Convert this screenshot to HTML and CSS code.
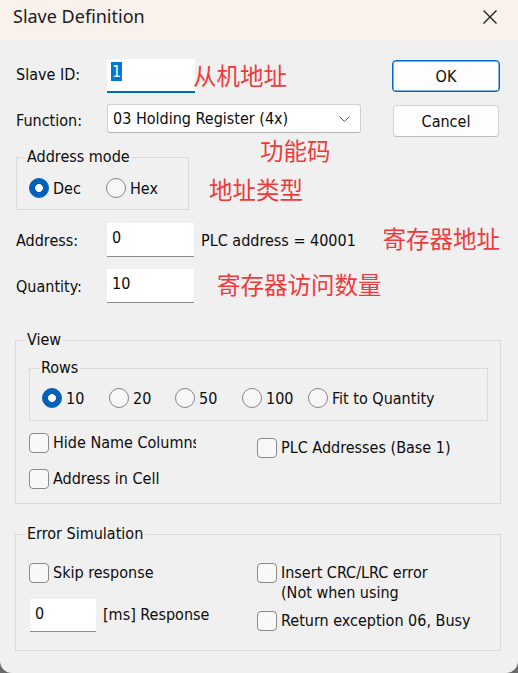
FILE: index.html
```html
<!DOCTYPE html>
<html lang="en">
<head>
<meta charset="utf-8">
<title>Slave Definition</title>
<link rel="stylesheet" href="styles.css">
</head>
<body>
<div class="window">
  <header class="titlebar">
    <span class="title">Slave Definition</span>
    <svg class="close" viewBox="0 0 16 16" width="16" height="16" aria-label="Close"><path d="M1.5 1.5 L14.5 14.5 M14.5 1.5 L1.5 14.5" stroke="#1c1c1c" stroke-width="1.3" fill="none"/></svg>
  </header>
  <main class="content">
    <div class="row row-id">
      <span class="lbl lbl-id">Slave ID:</span>
      <div class="field field-focus"><span class="selected">1</span></div>
      <span class="note note-id">从机地址</span>
      <button class="btn btn-default">OK</button>
    </div>
    <div class="row row-fn">
      <span class="lbl lbl-fn">Function:</span>
      <div class="select">
        <span class="select-text">03 Holding Register (4x)</span>
        <svg class="chevron" viewBox="0 0 11 6" width="11" height="6"><path d="M0.5 0.5 L5.5 5.5 L10.5 0.5" stroke="#555" stroke-width="1" fill="none"/></svg>
      </div>
      <button class="btn btn-cancel">Cancel</button>
    </div>
    <div class="row row-mode">
      <fieldset class="group group-mode">
        <legend>Address mode</legend>
        <div class="radio-row">
          <span class="radio-item item-dec"><span class="radio on"></span>Dec</span>
          <span class="radio-item"><span class="radio"></span>Hex</span>
        </div>
      </fieldset>
      <div class="notes">
        <span class="note note-fn">功能码</span>
        <span class="note note-type">地址类型</span>
      </div>
    </div>
    <div class="row row-addr">
      <span class="lbl">Address:</span>
      <div class="field field-plain">0</div>
      <span class="plc">PLC address = 40001</span>
      <span class="note note-addr">寄存器地址</span>
    </div>
    <div class="row row-qty">
      <span class="lbl">Quantity:</span>
      <div class="field field-plain">10</div>
      <span class="note note-qty">寄存器访问数量</span>
    </div>

    <fieldset class="group group-view">
      <legend>View</legend>
      <fieldset class="group group-rows">
        <legend>Rows</legend>
        <div class="rows-grid">
          <span class="radio-item"><span class="radio on"></span>10</span>
          <span class="radio-item"><span class="radio"></span>20</span>
          <span class="radio-item"><span class="radio"></span>50</span>
          <span class="radio-item"><span class="radio"></span>100</span>
          <span class="radio-item"><span class="radio"></span>Fit to Quantity</span>
        </div>
      </fieldset>
      <div class="checks">
        <div class="col col-left">
          <span class="check-item"><span class="check"></span><span class="clip">Hide Name Columns</span></span>
          <span class="check-item"><span class="check"></span>Address in Cell</span>
        </div>
        <div class="col col-right">
          <span class="check-item"><span class="check"></span>PLC Addresses (Base 1)</span>
        </div>
      </div>
    </fieldset>

    <fieldset class="group group-err">
      <legend>Error Simulation</legend>
      <div class="checks">
        <div class="col col-left">
          <span class="check-item"><span class="check"></span>Skip response</span>
          <div class="resp-row">
            <div class="field field-small">0</div>
            <span class="resp-label">[ms] Response</span>
          </div>
        </div>
        <div class="col col-right col-err">
          <span class="check-item item-top"><span class="check"></span><span class="two-line">Insert CRC/LRC error<br>(Not when using</span></span>
          <span class="check-item item-ret"><span class="check"></span>Return exception 06, Busy</span>
        </div>
      </div>
    </fieldset>
  </main>
</div>
</body>
</html>
```

FILE: styles.css
```css
* { box-sizing: border-box; }

html, body {
  margin: 0;
  padding: 0;
}

body {
  width: 518px;
  height: 673px;
  overflow: hidden;
  background: #6a6a6a;
  font-family: "DejaVu Sans Condensed", "Liberation Sans", sans-serif;
  font-size: 16px;
  color: #0c0c0c;
}

.window {
  width: 518px;
  height: 673px;
  background: #f0f0f0;
  border-radius: 0 0 12px 12px;
  overflow: hidden;
  display: flex;
  flex-direction: column;
}

/* ---------- title bar ---------- */
.titlebar {
  flex: none;
  height: 40px;
  background: #f8f1ec;
  display: flex;
  align-items: flex-start;
  padding-left: 13px;
}

.title {
  font-family: "Noto Sans", "Open Sans", sans-serif;
  font-size: 18px;
  line-height: 24px;
  margin-top: 4px;
  color: #1b1b1b;
}

.close {
  margin-left: auto;
  margin-top: 9px;
  margin-right: 20px;
}

/* ---------- content ---------- */
.content {
  padding: 0 18px 0 15px;
  display: flex;
  flex-direction: column;
}

.row {
  display: flex;
  padding-left: 1px;
}

.lbl {
  flex: none;
  width: 91px;
  line-height: 19px;
}

.note {
  font-family: "Noto Sans CJK SC", "Noto Sans CJK JP", sans-serif;
  font-size: 23.5px;
  line-height: 23.5px;
  color: #ef3a3d;
  white-space: nowrap;
}

/* text fields */
.field {
  flex: none;
  background: #ffffff;
  line-height: 19px;
}

.field-focus {
  width: 88px;
  height: 34px;
  border-bottom: 2px solid #0067c0;
  padding: 3px 0 0 4px;
}

.selected {
  display: inline-block;
  background: #0078d7;
  color: #ffffff;
  padding: 0 1px;
}

.field-plain {
  width: 87px;
  height: 34px;
  border-bottom: 1px solid #8c8c8c;
  padding: 5px 0 0 5px;
}

.field-small {
  width: 66px;
  height: 33px;
  border-bottom: 1px solid #8c8c8c;
  padding: 5px 0 0 5px;
  margin-left: 1px;
}

/* buttons */
.btn {
  font: inherit;
  color: #0c0c0c;
  background: #fdfdfd;
  height: 32px;
  border-radius: 4px;
  padding: 0;
  margin-left: auto;
  margin-top: 1px;
}

.btn-default {
  width: 108px;
  border: 1px solid #0067c0;
  box-shadow: inset 0 0 0 0.5px #0067c0;
}

.btn-cancel {
  width: 106px;
  margin-right: 1px;
  border: 1px solid #d3d3d3;
  border-bottom-color: #bdbdbd;
}

/* row 1 */
.row-id {
  margin-top: 19px;
  height: 34px;
  align-items: flex-start;
}

.lbl-id { margin-top: 6px; }

.note-id { margin-top: 5px; margin-left: -2px; }

/* row 2 */
.row-fn {
  margin-top: 11px;
  align-items: flex-start;
}

.lbl-fn { margin-top: 7px; }

.select {
  flex: none;
  width: 254px;
  height: 29px;
  background: #ffffff;
  border: 1px solid #d0d0d0;
  border-bottom-color: #b4b4b4;
  border-radius: 3px;
  display: flex;
  align-items: center;
  padding: 0 10px 0 5px;
}

.select-text { line-height: 19px; }

.chevron { margin-left: auto; }

/* group boxes */
.group {
  margin: 0;
  min-width: 0;
  border: 1px solid #dadada;
  border-radius: 0;
}

.group > legend {
  padding: 0 2px;
  margin-left: -4px;
  line-height: 18px;
  font-size: 16px;
}

/* address mode */
.row-mode {
  align-items: flex-start;
}

.group-mode {
  width: 173px;
  margin-top: 11px;
  padding: 12px 12px 11px 12px;
}

.radio-row {
  display: flex;
}

.radio-item {
  display: flex;
  align-items: center;
  height: 20px;
  white-space: nowrap;
}

.item-dec { width: 77px; }

.radio {
  flex: none;
  width: 20px;
  height: 20px;
  border-radius: 50%;
  border: 1px solid #858585;
  background: #f7f7f7;
  margin-right: 4px;
}

.radio.on {
  border-color: #005fb8;
  background: radial-gradient(circle, #ffffff 0 3.6px, #005fb8 4.3px);
}

.notes {
  display: flex;
  flex-direction: column;
  margin-left: 20px;
}

.note-fn { margin-left: 51px; margin-top: 2px; }

.note-type { margin-top: 15px; }

/* address / quantity */
.row-addr {
  margin-top: 13px;
  align-items: center;
}

.plc {
  margin-left: 7px;
  white-space: nowrap;
}

.note-addr { margin-left: auto; margin-top: -3px; }

.row-qty {
  margin-top: 12px;
  align-items: center;
}

.note-qty { margin-left: 23px; margin-top: -3px; }

/* view */
.group-view {
  width: 486px;
  margin-top: 28px;
  padding: 10px 12px 14px 13px;
}

.group-rows {
  width: 459px;
  padding: 11px 12px 12px 12px;
}

.group-rows > legend { margin-left: -3px; }

.rows-grid {
  display: grid;
  grid-template-columns: 67px 66px 67px 66px auto;
}

.checks {
  display: flex;
  margin-top: 12px;
}

.group-err .checks { margin-top: 0; }

.col {
  display: flex;
  flex-direction: column;
}

.col-left {
  width: 228px;
  gap: 16px;
}

.col-right { margin-top: 5px; }

.col-err { margin-top: 0; }

.check-item {
  display: flex;
  align-items: center;
  white-space: nowrap;
  line-height: 20px;
}

.check {
  flex: none;
  width: 20px;
  height: 20px;
  border: 1px solid #8a8a8a;
  border-radius: 4px;
  background: #f8f8f8;
  margin-right: 4px;
}

.clip {
  display: block;
  width: 143px;
  overflow: hidden;
}

/* error simulation */
.group-err {
  width: 486px;
  margin-top: 21px;
  padding: 20px 12px 18px 13px;
}

.resp-row {
  display: flex;
  align-items: center;
}

.resp-label {
  margin-left: 7px;
  margin-top: -3px;
}

.item-top { align-items: flex-start; }

.two-line {
  line-height: 20px;
}

.item-ret { margin-top: 8px; }
```
